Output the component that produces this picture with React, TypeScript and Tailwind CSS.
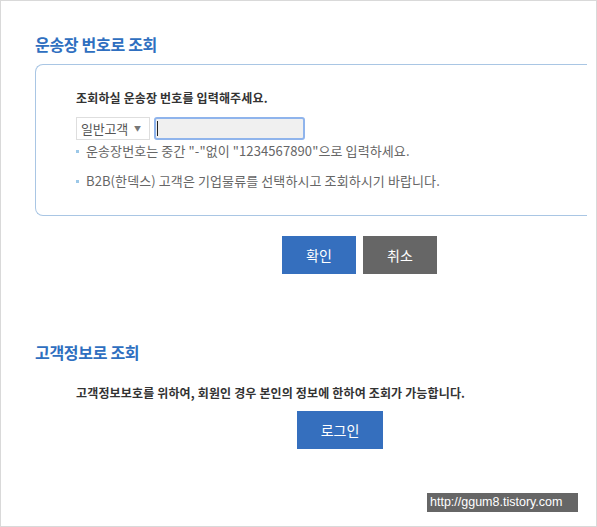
const FONT = "font-['Noto_Sans_CJK_KR','Noto_Sans',sans-serif]";

const Bullet = ({ children }: { children: React.ReactNode }) => (
  <li className="flex items-center">
    <span className="w-[3px] h-[3px] bg-[#9cc8e8] mr-[7px]" />
    <span>{children}</span>
  </li>
);

export default function App() {
  return (
    <div className={`relative w-[597px] h-[527px] border border-[#d9d9d9] bg-white ${FONT}`}>
      <div className="pl-[34px] pt-[32px]">
        <h2 className="text-[16px] leading-[22px] font-bold text-[#2f6fc0] tracking-[-0.3px]">
          운송장 번호로 조회
        </h2>

        <div className="mt-[9px] w-[552px] h-[152px] border-l border-t border-b border-[#a9c6e4] rounded-l-[8px] pl-[40px] pt-[25px]">
          <p className="text-[12px] leading-[16px] font-bold text-[#333] tracking-[0.15px]">
            조회하실 운송장 번호를 입력해주세요.
          </p>
          <div className="mt-[11px] flex gap-[4px]">
            <div className="w-[74px] h-[23px] border border-[#dedede] flex items-center justify-between pl-[4px] pr-[8px] text-[13px] text-[#555]">
              <span className="tracking-[-0.2px]">일반고객</span>
              <span className="text-[7px] text-[#777]">▼</span>
            </div>
            <div className="w-[151px] h-[23px] border-2 border-[#8fb4ec] rounded-[3px] bg-[#f0f0f0] flex items-center pl-[1px]">
              <span className="w-px h-[15px] bg-[#222]" />
            </div>
          </div>
          <ul className="mt-[1px] text-[13px] leading-[20px] text-[#666] tracking-[0.1px]">
            <Bullet>운송장번호는 중간 "-"없이 "1234567890"으로 입력하세요.</Bullet>
            <li className="h-[10px]" />
            <Bullet>B2B(한덱스) 고객은 기업물류를 선택하시고 조회하시기 바랍니다.</Bullet>
          </ul>
        </div>

        <div className="mt-[20px] ml-[247px] flex gap-[7px]">
          <button type="button" className="w-[74px] h-[38px] bg-[#356fbe] text-white text-[14px]">
            확인
          </button>
          <button type="button" className="w-[74px] h-[38px] bg-[#666666] text-white text-[14px]">
            취소
          </button>
        </div>

        <h2 className="mt-[67px] text-[16px] leading-[22px] font-bold text-[#2f6fc0] tracking-[-0.3px]">
          고객정보로 조회
        </h2>
        <p className="mt-[22px] ml-[41px] text-[12px] leading-[16px] font-bold text-[#333] tracking-[0.15px]">
          고객정보보호를 위하여, 회원인 경우 본인의 정보에 한하여 조회가 가능합니다.
        </p>
        <button type="button" className="mt-[10px] ml-[262px] w-[86px] h-[38px] bg-[#356fbe] text-white text-[14px]">
          로그인
        </button>
      </div>

      <div className="absolute right-[18px] bottom-[14px] w-[151px] h-[19px] bg-[#666666] text-white text-[12.5px] leading-[19px] pl-[3px] whitespace-nowrap overflow-hidden font-['Liberation_Sans',sans-serif]">
        http://ggum8.tistory.com
      </div>
    </div>
  );
}
